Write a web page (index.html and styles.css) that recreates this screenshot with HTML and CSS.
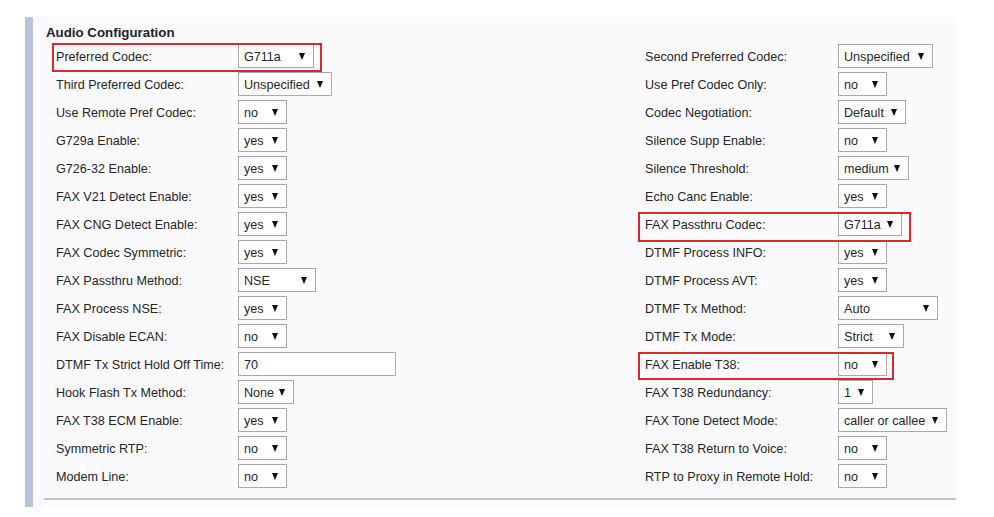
FILE: index.html
```html
<!DOCTYPE html>
<html>
<head>
<meta charset="utf-8">
<title>Audio Configuration</title>
<link rel="stylesheet" href="styles.css">
</head>
<body>
<div class="page">
  <div class="panel">
    <div class="title">Audio Configuration</div>
    <div class="grid">
      <div class="lbl">Preferred Codec:</div>
      <div class="ctl"><span class="sel w76"><span>G711a</span><svg class="arr" viewBox="0 0 6 7"><polygon points="0,0 6,0 3,7"/></svg></span></div>
      <div class="lbl">Second Preferred Codec:</div>
      <div class="ctl"><span class="sel w95"><span>Unspecified</span><svg class="arr" viewBox="0 0 6 7"><polygon points="0,0 6,0 3,7"/></svg></span></div>

      <div class="lbl">Third Preferred Codec:</div>
      <div class="ctl"><span class="sel w94"><span>Unspecified</span><svg class="arr" viewBox="0 0 6 7"><polygon points="0,0 6,0 3,7"/></svg></span></div>
      <div class="lbl">Use Pref Codec Only:</div>
      <div class="ctl"><span class="sel w49"><span>no</span><svg class="arr" viewBox="0 0 6 7"><polygon points="0,0 6,0 3,7"/></svg></span></div>

      <div class="lbl">Use Remote Pref Codec:</div>
      <div class="ctl"><span class="sel w49"><span>no</span><svg class="arr" viewBox="0 0 6 7"><polygon points="0,0 6,0 3,7"/></svg></span></div>
      <div class="lbl">Codec Negotiation:</div>
      <div class="ctl"><span class="sel w68"><span>Default</span><svg class="arr" viewBox="0 0 6 7"><polygon points="0,0 6,0 3,7"/></svg></span></div>

      <div class="lbl">G729a Enable:</div>
      <div class="ctl"><span class="sel w49"><span>yes</span><svg class="arr" viewBox="0 0 6 7"><polygon points="0,0 6,0 3,7"/></svg></span></div>
      <div class="lbl">Silence Supp Enable:</div>
      <div class="ctl"><span class="sel w49"><span>no</span><svg class="arr" viewBox="0 0 6 7"><polygon points="0,0 6,0 3,7"/></svg></span></div>

      <div class="lbl">G726-32 Enable:</div>
      <div class="ctl"><span class="sel w49"><span>yes</span><svg class="arr" viewBox="0 0 6 7"><polygon points="0,0 6,0 3,7"/></svg></span></div>
      <div class="lbl">Silence Threshold:</div>
      <div class="ctl"><span class="sel w71"><span>medium</span><svg class="arr" viewBox="0 0 6 7"><polygon points="0,0 6,0 3,7"/></svg></span></div>

      <div class="lbl">FAX V21 Detect Enable:</div>
      <div class="ctl"><span class="sel w49"><span>yes</span><svg class="arr" viewBox="0 0 6 7"><polygon points="0,0 6,0 3,7"/></svg></span></div>
      <div class="lbl">Echo Canc Enable:</div>
      <div class="ctl"><span class="sel w49"><span>yes</span><svg class="arr" viewBox="0 0 6 7"><polygon points="0,0 6,0 3,7"/></svg></span></div>

      <div class="lbl">FAX CNG Detect Enable:</div>
      <div class="ctl"><span class="sel w49"><span>yes</span><svg class="arr" viewBox="0 0 6 7"><polygon points="0,0 6,0 3,7"/></svg></span></div>
      <div class="lbl">FAX Passthru Codec:</div>
      <div class="ctl"><span class="sel w64"><span>G711a</span><svg class="arr" viewBox="0 0 6 7"><polygon points="0,0 6,0 3,7"/></svg></span></div>

      <div class="lbl">FAX Codec Symmetric:</div>
      <div class="ctl"><span class="sel w49"><span>yes</span><svg class="arr" viewBox="0 0 6 7"><polygon points="0,0 6,0 3,7"/></svg></span></div>
      <div class="lbl">DTMF Process INFO:</div>
      <div class="ctl"><span class="sel w49"><span>yes</span><svg class="arr" viewBox="0 0 6 7"><polygon points="0,0 6,0 3,7"/></svg></span></div>

      <div class="lbl">FAX Passthru Method:</div>
      <div class="ctl"><span class="sel w78"><span>NSE</span><svg class="arr" viewBox="0 0 6 7"><polygon points="0,0 6,0 3,7"/></svg></span></div>
      <div class="lbl">DTMF Process AVT:</div>
      <div class="ctl"><span class="sel w49"><span>yes</span><svg class="arr" viewBox="0 0 6 7"><polygon points="0,0 6,0 3,7"/></svg></span></div>

      <div class="lbl">FAX Process NSE:</div>
      <div class="ctl"><span class="sel w49"><span>yes</span><svg class="arr" viewBox="0 0 6 7"><polygon points="0,0 6,0 3,7"/></svg></span></div>
      <div class="lbl">DTMF Tx Method:</div>
      <div class="ctl"><span class="sel w100"><span>Auto</span><svg class="arr" viewBox="0 0 6 7"><polygon points="0,0 6,0 3,7"/></svg></span></div>

      <div class="lbl">FAX Disable ECAN:</div>
      <div class="ctl"><span class="sel w49"><span>no</span><svg class="arr" viewBox="0 0 6 7"><polygon points="0,0 6,0 3,7"/></svg></span></div>
      <div class="lbl">DTMF Tx Mode:</div>
      <div class="ctl"><span class="sel w66"><span>Strict</span><svg class="arr" viewBox="0 0 6 7"><polygon points="0,0 6,0 3,7"/></svg></span></div>

      <div class="lbl">DTMF Tx Strict Hold Off Time:</div>
      <div class="ctl"><span class="txt">70</span></div>
      <div class="lbl">FAX Enable T38:</div>
      <div class="ctl"><span class="sel w49"><span>no</span><svg class="arr" viewBox="0 0 6 7"><polygon points="0,0 6,0 3,7"/></svg></span></div>

      <div class="lbl">Hook Flash Tx Method:</div>
      <div class="ctl"><span class="sel w56"><span>None</span><svg class="arr" viewBox="0 0 6 7"><polygon points="0,0 6,0 3,7"/></svg></span></div>
      <div class="lbl">FAX T38 Redundancy:</div>
      <div class="ctl"><span class="sel w35"><span>1</span><svg class="arr" viewBox="0 0 6 7"><polygon points="0,0 6,0 3,7"/></svg></span></div>

      <div class="lbl">FAX T38 ECM Enable:</div>
      <div class="ctl"><span class="sel w49"><span>yes</span><svg class="arr" viewBox="0 0 6 7"><polygon points="0,0 6,0 3,7"/></svg></span></div>
      <div class="lbl">FAX Tone Detect Mode:</div>
      <div class="ctl"><span class="sel w109"><span>caller or callee</span><svg class="arr" viewBox="0 0 6 7"><polygon points="0,0 6,0 3,7"/></svg></span></div>

      <div class="lbl">Symmetric RTP:</div>
      <div class="ctl"><span class="sel w49"><span>no</span><svg class="arr" viewBox="0 0 6 7"><polygon points="0,0 6,0 3,7"/></svg></span></div>
      <div class="lbl">FAX T38 Return to Voice:</div>
      <div class="ctl"><span class="sel w49"><span>no</span><svg class="arr" viewBox="0 0 6 7"><polygon points="0,0 6,0 3,7"/></svg></span></div>

      <div class="lbl">Modem Line:</div>
      <div class="ctl"><span class="sel w49"><span>no</span><svg class="arr" viewBox="0 0 6 7"><polygon points="0,0 6,0 3,7"/></svg></span></div>
      <div class="lbl">RTP to Proxy in Remote Hold:</div>
      <div class="ctl"><span class="sel w49"><span>no</span><svg class="arr" viewBox="0 0 6 7"><polygon points="0,0 6,0 3,7"/></svg></span></div>
    </div>
    <div class="rule"></div>
    <div class="mark mark-pref"></div>
    <div class="mark mark-passthru"></div>
    <div class="mark mark-t38"></div>
  </div>
</div>
</body>
</html>
```

FILE: styles.css
```css
html, body {
  margin: 0;
  padding: 0;
  background: #ffffff;
}

body {
  font-family: "Liberation Sans", Arial, sans-serif;
  color: #262626;
}

.page {
  padding: 17px 0 0 25px;
}

.panel {
  position: relative;
  box-sizing: border-box;
  width: 931px;
  border-left: 8px solid #b8c4d9;
  background: #fafafc;
  padding: 7px 0 0 13px;
}

.title {
  font-size: 13.3px;
  font-weight: bold;
  line-height: 18px;
  color: #222;
}

.grid {
  display: grid;
  grid-template-columns: 182px 407px 193px 1fr;
  grid-auto-rows: 28px;
  margin: 0 0 0 10px;
}

.lbl, .ctl {
  display: flex;
  align-items: center;
  font-size: 12.6px;
}

.lbl {
  padding-top: 1px;
}

.sel, .txt {
  box-sizing: border-box;
  height: 24px;
  display: flex;
  align-items: center;
  border: 1px solid #a9a9a9;
  background: #ffffff;
  padding: 1px 0 0 5px;
  font-size: 12.6px;
  color: #262626;
}

.sel span {
  flex: 1;
  white-space: nowrap;
}

.arr {
  width: 6px;
  height: 7px;
  margin-right: 8px;
  fill: #111;
  flex: none;
}

.txt {
  width: 158px;
}

.w35 { width: 35px; }
.w49 { width: 49px; }
.w56 { width: 56px; }
.w64 { width: 64px; }
.w66 { width: 66px; }
.w68 { width: 68px; }
.w71 { width: 71px; }
.w76 { width: 76px; }
.w78 { width: 78px; }
.w94 { width: 94px; }
.w95 { width: 95px; }
.w100 { width: 100px; }
.w109 { width: 109px; }

.rule {
  margin: 8px 0 0 -2px;
  height: 7px;
  border-top: 2px solid #c4c4cc;
  background: #fcfcfe;
}

.mark {
  position: absolute;
  box-sizing: border-box;
  border: 2px solid #d9292e;
}

.mark-pref {
  left: 19px;
  top: 26px;
  width: 270px;
  height: 29px;
}

.mark-passthru {
  left: 605px;
  top: 195px;
  width: 273px;
  height: 30px;
}

.mark-t38 {
  left: 605px;
  top: 335px;
  width: 256px;
  height: 28px;
}
```
